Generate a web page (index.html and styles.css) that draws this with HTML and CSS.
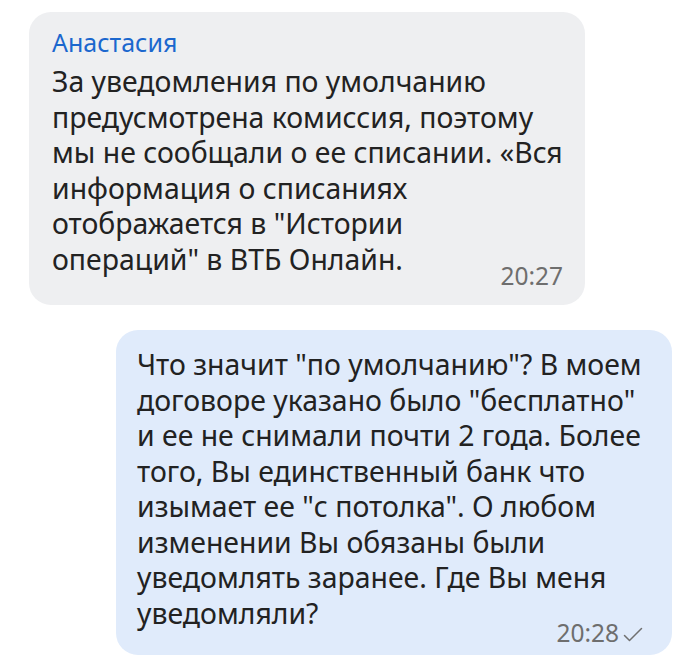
FILE: index.html
```html
<!DOCTYPE html>
<html lang="ru">
<head>
<meta charset="utf-8">
<link rel="stylesheet" href="styles.css">
</head>
<body>
<div class="chat">
  <div class="bubble bubble--in">
    <div class="author">Анастасия</div>
    <div class="text">За уведомления по умолчанию<br>предусмотрена комиссия, поэтому<br>мы не сообщали о ее списании. «Вся<br>информация о списаниях<br>отображается в "Истории<br>операций" в ВТБ Онлайн.</div>
    <div class="meta meta--in">20:27</div>
  </div>
  <div class="bubble bubble--out">
    <div class="text">Что значит "по умолчанию"? В моем<br>договоре указано было "бесплатно"<br>и ее не снимали почти 2 года. Более<br>того, Вы единственный банк что<br>изымает ее "с потолка". О любом<br>изменении Вы обязаны были<br>уведомлять заранее. Где Вы меня<br>уведомляли?</div>
    <div class="meta meta--out">20:28<svg class="check" viewBox="0 0 20 16" width="20" height="16"><path d="M1.5 8.5 L6.5 13.5 L18.5 1.5" fill="none" stroke="currentColor" stroke-width="1.5" stroke-linecap="round" stroke-linejoin="round"/></svg></div>
  </div>
</div>
</body>
</html>
```
FILE: styles.css
```css
html, body {
  margin: 0;
  padding: 0;
  background: #ffffff;
}
body {
  font-family: "Noto Sans", "Open Sans", sans-serif;
  color: #222222;
  width: 700px;
  height: 657px;
  overflow: hidden;
}
.chat {
  display: flex;
  flex-direction: column;
  gap: 25px;
  padding: 12px 29px 0 29px;
}
.bubble {
  width: 556px;
  box-sizing: border-box;
  border-radius: 22px;
}
.bubble--in {
  align-self: flex-start;
  background: #eeeff1;
  padding: 15.3px 22px 17.5px 23px;
}
.bubble--out {
  align-self: flex-end;
  margin-right: -1px;
  background: #e0ebfb;
  padding: 17.2px 29px 10.5px 21px;
}
.author {
  font-size: 25px;
  line-height: 30px;
  color: #1b67ce;
  margin-bottom: 6.9px;
}
.text {
  font-size: 28.4px;
  line-height: 35.5px;
}
.meta {
  display: flex;
  justify-content: flex-end;
  align-items: flex-end;
  gap: 4px;
  font-size: 24.5px;
  line-height: 24px;
  color: #6e6e6e;
}
.meta--in {
  margin-top: -13.7px;
}
.meta--out {
  margin-top: -10.7px;
}
.check {
  color: #707070;
  margin-bottom: 2px;
}
```
